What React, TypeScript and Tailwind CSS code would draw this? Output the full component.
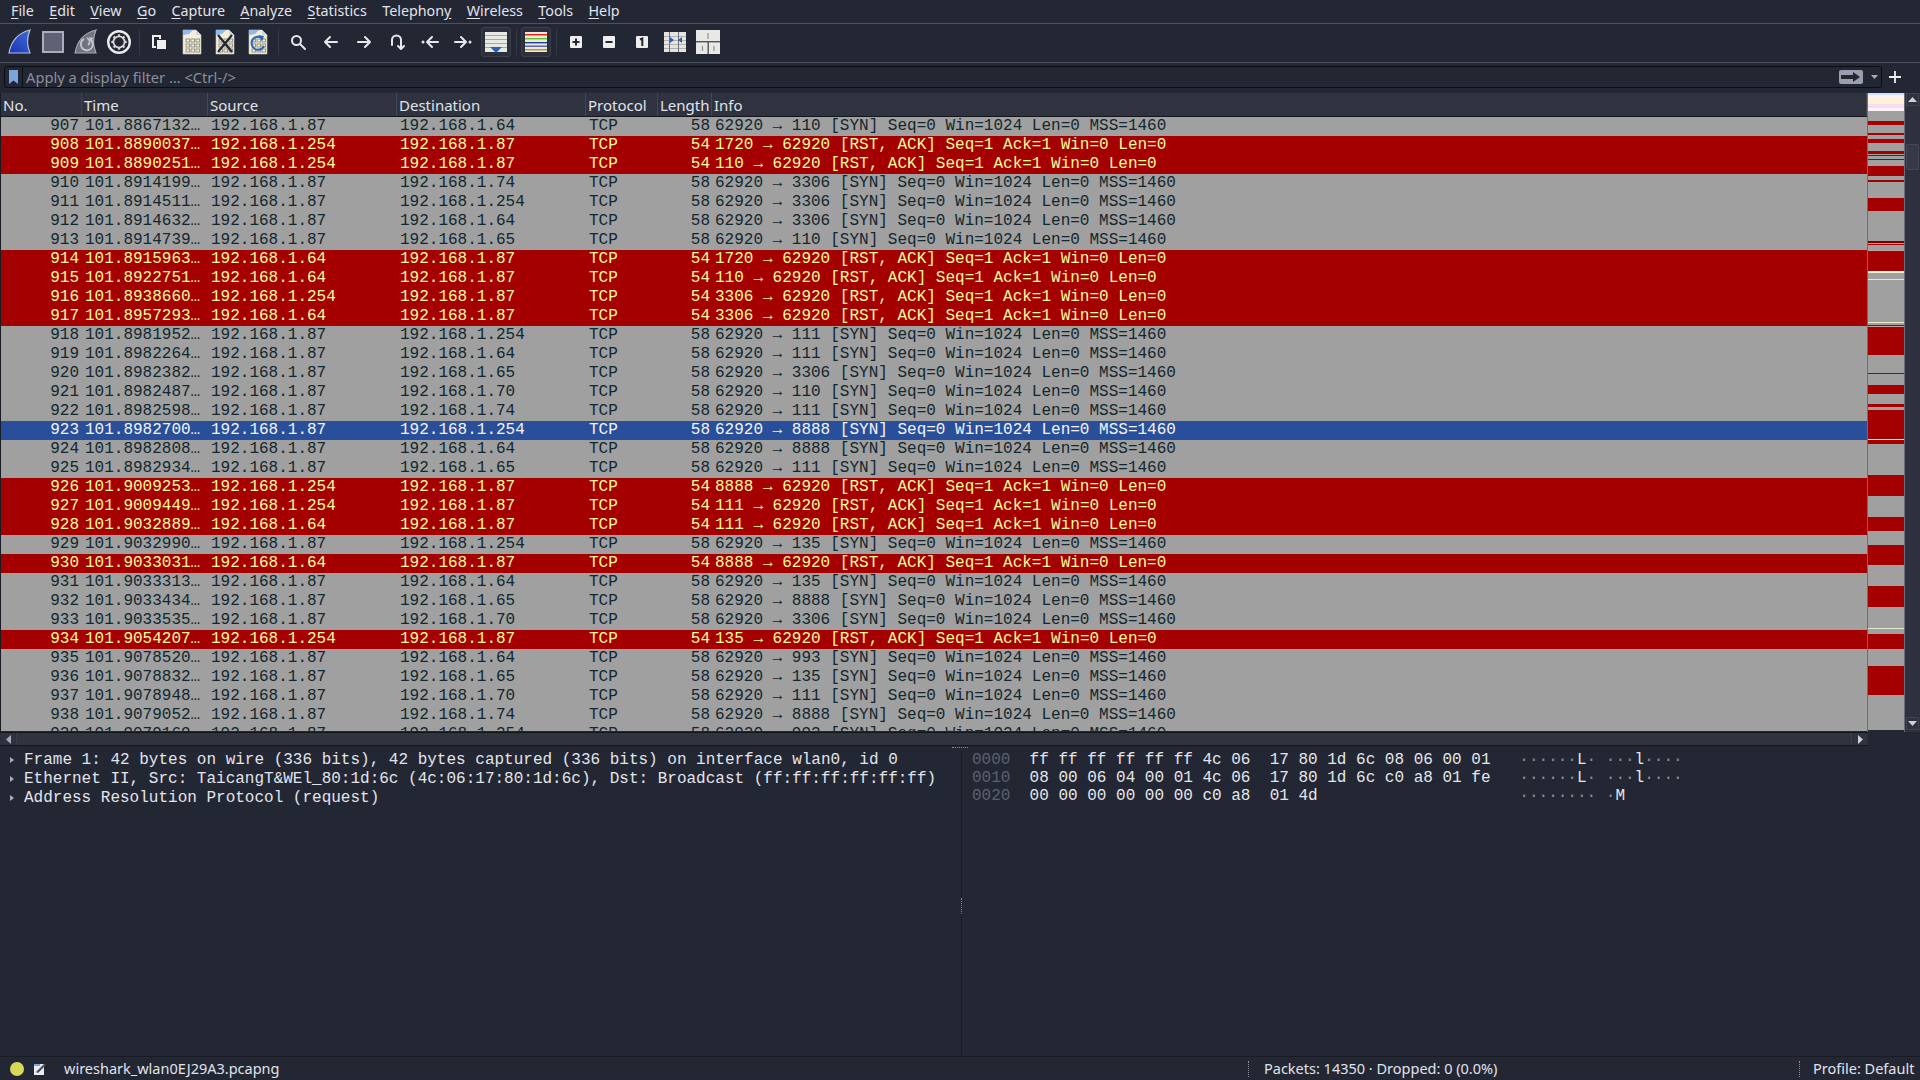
import React from "react";

type Kind = "syn" | "rst" | "sel";
type Packet = [number, string, string, string, number, string, Kind?];

const SYN = "[SYN] Seq=0 Win=1024 Len=0 MSS=1460";
const RST = "[RST, ACK] Seq=1 Ack=1 Win=0 Len=0";

const packets: Packet[] = [
  [907, "101.8867132…", ".87", ".64", 58, "62920 → 110"],
  [908, "101.8890037…", ".254", ".87", 54, "1720 → 62920"],
  [909, "101.8890251…", ".254", ".87", 54, "110 → 62920"],
  [910, "101.8914199…", ".87", ".74", 58, "62920 → 3306"],
  [911, "101.8914511…", ".87", ".254", 58, "62920 → 3306"],
  [912, "101.8914632…", ".87", ".64", 58, "62920 → 3306"],
  [913, "101.8914739…", ".87", ".65", 58, "62920 → 110"],
  [914, "101.8915963…", ".64", ".87", 54, "1720 → 62920"],
  [915, "101.8922751…", ".64", ".87", 54, "110 → 62920"],
  [916, "101.8938660…", ".254", ".87", 54, "3306 → 62920"],
  [917, "101.8957293…", ".64", ".87", 54, "3306 → 62920"],
  [918, "101.8981952…", ".87", ".254", 58, "62920 → 111"],
  [919, "101.8982264…", ".87", ".64", 58, "62920 → 111"],
  [920, "101.8982382…", ".87", ".65", 58, "62920 → 3306"],
  [921, "101.8982487…", ".87", ".70", 58, "62920 → 110"],
  [922, "101.8982598…", ".87", ".74", 58, "62920 → 111"],
  [923, "101.8982700…", ".87", ".254", 58, "62920 → 8888", "sel"],
  [924, "101.8982808…", ".87", ".64", 58, "62920 → 8888"],
  [925, "101.8982934…", ".87", ".65", 58, "62920 → 111"],
  [926, "101.9009253…", ".254", ".87", 54, "8888 → 62920"],
  [927, "101.9009449…", ".254", ".87", 54, "111 → 62920"],
  [928, "101.9032889…", ".64", ".87", 54, "111 → 62920"],
  [929, "101.9032990…", ".87", ".254", 58, "62920 → 135"],
  [930, "101.9033031…", ".64", ".87", 54, "8888 → 62920"],
  [931, "101.9033313…", ".87", ".64", 58, "62920 → 135"],
  [932, "101.9033434…", ".87", ".65", 58, "62920 → 8888"],
  [933, "101.9033535…", ".87", ".70", 58, "62920 → 3306"],
  [934, "101.9054207…", ".254", ".87", 54, "135 → 62920"],
  [935, "101.9078520…", ".87", ".64", 58, "62920 → 993"],
  [936, "101.9078832…", ".87", ".65", 58, "62920 → 135"],
  [937, "101.9078948…", ".87", ".70", 58, "62920 → 111"],
  [938, "101.9079052…", ".87", ".74", 58, "62920 → 8888"],
  [939, "101.9079169…", ".87", ".254", 58, "62920 → 993"],
];

// [top, bottom, colour] in page pixels, minimap starts at y=93
const minimapBands: [number, number, string][] = [
  [121, 125, "#a40000"], [133, 135, "#a40000"], [139, 143, "#a40000"], [151, 154, "#a40000"],
  [155, 156, "#a40000"], [159, 160, "#a40000"], [166, 176, "#a40000"], [180, 182, "#a40000"],
  [198, 211, "#a40000"], [241, 243, "#7a0000"], [244, 245, "#a40000"], [250, 251, "#c8a0a0"],
  [251, 271, "#a40000"], [271, 273, "#f4f8d8"], [279, 280, "#e4ecc8"], [322, 323, "#e4ecc8"],
  [325, 326, "#a40000"], [326, 327, "#c8a0a0"], [327, 355, "#a40000"], [373, 374, "#a40000"],
  [385, 394, "#a40000"], [404, 407, "#a40000"], [410, 411, "#a40000"], [411, 439, "#a40000"],
  [439, 440, "#fcfcf0"], [440, 444, "#a40000"], [475, 496, "#a40000"], [517, 531, "#a40000"],
  [545, 565, "#a40000"], [586, 607, "#a40000"], [628, 629, "#e4ecc8"], [634, 649, "#a40000"],
  [666, 695, "#a40000"],
];

const rowStyles: Record<Kind, string> = {
  syn: "bg-[#a0a0a0] text-[#12272e]",
  rst: "bg-[#a40000] text-[#fffc9c]",
  sel: "bg-[#2a4f9a] text-[#f4f4f8]",
};

const menus: [string, string, string][] = [
  ["", "F", "ile"], ["", "E", "dit"], ["", "V", "iew"], ["", "G", "o"], ["", "C", "apture"], ["", "A", "nalyze"],
  ["", "S", "tatistics"], ["Telephon", "y", ""], ["", "W", "ireless"], ["", "T", "ools"], ["", "H", "elp"],
];

const DocBase = ({ children }: { children?: React.ReactNode }) => (
  <svg width="24" height="26" viewBox="0 0 24 26">
    <path d="M3 1h13l5 5v19H3z" fill="#f3eed8" stroke="#c9c6b4" strokeWidth="0.6" />
    <path d="M3 1h10l-4 4-6 1z" fill="#8fbce8" />
    <path d="M16 1l5 5h-5z" fill="#cfd8e0" />
    {[10, 15, 20].map((y) =>
      [6, 11, 16].map((x) => <rect key={`${x}-${y}`} x={x} y={y} width="3.6" height="3" fill="none" stroke="#8a8c86" strokeWidth="0.9" />),
    )}
    {children}
  </svg>
);

const SquareIcon = ({ d }: { d: string }) => (
  <svg width="14" height="14" viewBox="0 0 14 14">
    <rect x="1" y="1" width="12" height="12" rx="1" fill="#eeeeee" />
    <path d={d} stroke="#23272f" strokeWidth="2" fill="none" />
  </svg>
);

const Stroke = ({ d }: { d: string }) => (
  <svg width="18" height="18" viewBox="0 0 18 18" fill="none" stroke="#e6e8ee" strokeWidth="2" strokeLinecap="round" strokeLinejoin="round">
    <path d={d} />
  </svg>
);

const gearTeeth = [0, 45, 90, 135, 180, 225, 270, 315];

const toolIcons: React.ReactNode[] = [
  <svg key="fin" width="24" height="26" viewBox="0 0 24 26">
    <defs>
      <linearGradient id="finBlue" x1="0" y1="1" x2="1" y2="0">
        <stop offset="0" stopColor="#1c34b0" />
        <stop offset="1" stopColor="#3f6ad8" />
      </linearGradient>
    </defs>
    <path d="M1 24C3 13 10 4 22 1c-3 7-3 16 0 23z" fill="url(#finBlue)" stroke="#b4c2de" strokeWidth="1.2" />
  </svg>,
  <svg key="stop" width="24" height="24" viewBox="0 0 24 24">
    <rect x="2" y="2" width="20" height="20" fill="#5e6274" stroke="#a9adbc" strokeWidth="2" />
  </svg>,
  <svg key="restart" width="24" height="26" viewBox="0 0 24 26">
    <path d="M1 24C3 13 10 4 22 1c-3 7-3 16 0 23z" fill="#70747f" stroke="#a6aab8" strokeWidth="1.2" />
    <path d="M10 10a6 6 0 1 0 7 1" fill="none" stroke="#c8cad2" strokeWidth="1.8" />
    <path d="M13 9a4 4 0 0 1 1 7" fill="none" stroke="#c8cad2" strokeWidth="1.6" />
    <path d="M15 8l4 1-2 4z" fill="#c8cad2" />
  </svg>,
  <svg key="gear" width="26" height="26" viewBox="0 0 26 26" fill="none">
    <circle cx="13" cy="13" r="10.8" stroke="#ececec" strokeWidth="2.4" />
    <circle cx="13" cy="13" r="5.6" stroke="#d8d8d8" strokeWidth="1.8" />
    {gearTeeth.map((a) => (
      <rect key={a} x="11.9" y="5.300" width="2.2" height="2.600" fill="#d8d8d8" transform={`rotate(${a} 13 13)`} />
    ))}
  </svg>,
  null,
  <svg key="open" width="16" height="16" viewBox="0 0 16 16">
    <path d="M1 1h9v4h-5v9H1z" fill="#f0f0f0" />
    <path d="M3 3h5v2H5v7H3z" fill="#23272f" />
    <rect x="6" y="6" width="9" height="9" fill="#f0f0f0" />
  </svg>,
  <DocBase key="doc" />,
  <DocBase key="close">
    <path d="M5 6l14 17M19 6L5 23" stroke="#23272f" strokeWidth="2.2" />
  </DocBase>,
  <DocBase key="reload">
    <path d="M17 10a6.5 6.5 0 1 0 1 7" stroke="#2b68b8" strokeWidth="2" fill="none" />
    <path d="M12 6l6 1-2 5z" fill="#2b68b8" />
  </DocBase>,
  null,
  <svg key="find" width="18" height="18" viewBox="0 0 18 18" fill="none" stroke="#e6e8ee" strokeWidth="2" strokeLinecap="round">
    <circle cx="7.5" cy="7.5" r="4.5" />
    <path d="M11 11l5 5" />
  </svg>,
  <Stroke key="back" d="M15 9H3M8 4L3 9l5 5" />,
  <Stroke key="fwd" d="M3 9h12M10 4l5 5-5 5" />,
  <Stroke key="goto" d="M4 12V7a4.500 4.500 0 0 1 9 0v8M10 13l3 3 3-3" />,
  <svg key="prev" width="18" height="18" viewBox="0 0 18 18" fill="none" stroke="#e6e8ee" strokeWidth="2" strokeLinecap="round" strokeLinejoin="round">
    <path d="M17 9H7M11 4L6 9l5 5" />
    <circle cx="2" cy="9" r="1.500" fill="#e6e8ee" stroke="none" />
  </svg>,
  <svg key="next" width="18" height="18" viewBox="0 0 18 18" fill="none" stroke="#e6e8ee" strokeWidth="2" strokeLinecap="round" strokeLinejoin="round">
    <path d="M1 9h10M7 4l5 5-5 5" />
    <circle cx="16" cy="9" r="1.500" fill="#e6e8ee" stroke="none" />
  </svg>,
  <div key="auto" className="flex h-[30px] w-[30px] items-center justify-center rounded-[3px] border border-[#3c404c] bg-[#2c303c]">
    <svg width="22" height="21" viewBox="0 0 22 21">
      <rect width="22" height="20" fill="#e8e8e4" />
      {[3, 7, 11, 15].map((y) => <rect key={y} y={y} width="22" height="1" fill="#a8a8a8" />)}
      <path d="M5 15h12l-6 6z" fill="#2b62b0" />
    </svg>
  </div>,
  null,
  <div key="color" className="flex h-[30px] w-[30px] items-center justify-center rounded-[3px] border border-[#3c404c] bg-[#2c303c]">
    <svg width="22" height="20" viewBox="0 0 22 20">
      <rect width="22" height="20" fill="#ece8dc" />
      <rect y="2" width="22" height="1.4" fill="#e02020" />
      <rect y="6" width="22" height="1.4" fill="#60c020" />
      <rect y="10" width="22" height="1.4" fill="#2040a0" />
      <rect y="13.5" width="22" height="1.4" fill="#5060a0" />
      <rect y="17" width="22" height="1.4" fill="#c89020" />
    </svg>
  </div>,
  null,
  <SquareIcon key="zin" d="M3.5 7h7M7 3.5v7" />,
  <SquareIcon key="zout" d="M3.5 7h7" />,
  <SquareIcon key="z1" d="M5 4.5L7.3 3.5V11" />,
  <svg key="resize" width="22" height="20" viewBox="0 0 22 20">
    <rect width="22" height="20" fill="#e4e4e0" />
    {[4, 8, 12, 16].map((y) => <rect key={y} y={y} width="22" height="1" fill="#b0b0b0" />)}
    <rect x="5" width="1" height="20" fill="#707070" />
    <rect x="14" width="1" height="20" fill="#707070" />
    <path d="M6 5l4 3-4 3zM18 5l-4 3 4 3z" fill="#2b62b0" />
  </svg>,
  <svg key="layout" width="24" height="24" viewBox="0 0 24 24">
    <rect width="24" height="24" fill="#e8e8e4" />
    <rect y="11" width="24" height="1.4" fill="#50545c" />
    <rect x="11.5" y="11" width="1.4" height="13" fill="#50545c" />
    <path d="M12 3v6M6.5 16v5M18 16v5" stroke="#909090" strokeWidth="1.2" />
  </svg>,
];

const Separator = () => (
  <div className="flex h-full w-[7px] items-center justify-center">
    <div className="h-[26px] w-px bg-[#343845]" />
  </div>
);

const columns = [
  { label: "No.", cls: "w-[81px]" },
  { label: "Time", cls: "w-[126px]" },
  { label: "Source", cls: "w-[189px]" },
  { label: "Destination", cls: "w-[189px]" },
  { label: "Protocol", cls: "w-[72px]" },
  { label: "Length", cls: "w-[54px]" },
  { label: "Info", cls: "flex-1" },
];

const Dots = () => <span className="text-[#8a8d96]">·</span>;

const HexLine = ({ off, hex, ascii }: { off: string; hex: string; ascii: string }) => (
  <div className="h-[18px] whitespace-pre leading-[18px] text-[#e4e6ea]">
    <span className="text-[#5c606b]">{off}</span>
    {"  " + hex.padEnd(48, " ") + "   "}
    {ascii.split("").map((ch, i) => (ch === "." ? <Dots key={i} /> : <span key={i}>{ch}</span>))}
  </div>
);

const Triangle = () => (
  <svg width="6" height="8" viewBox="0 0 6 8" className="mr-[9px] shrink-0">
    <path d="M1 1l4 3-4 3z" fill="#a8acb6" />
  </svg>
);

export default function App() {
  return (
    <div className="flex h-screen w-full flex-col overflow-hidden bg-[#232733] font-['Noto_Sans',sans-serif] text-[15px] text-[#e0e3ea]">
      {/* menu bar */}
      <div className="flex h-[23px] shrink-0 items-center gap-[15.4px] pb-[1px] pl-[11px] text-[14.3px] leading-none">
        {menus.map(([pre, key, post]) => (
          <span key={pre + key + post}>
            {pre}
            <span className="underline underline-offset-2">{key}</span>
            {post}
          </span>
        ))}
      </div>
      <div className="h-px shrink-0 bg-[#4e525e]" />

      {/* toolbar */}
      <div className="flex h-[38px] shrink-0 items-center pb-[2px] pl-[3.5px]">
        {toolIcons.map((icon, i) =>
          icon === null ? (
            <Separator key={i} />
          ) : (
            <div key={i} className="flex h-full w-[33px] items-center justify-center">
              {icon}
            </div>
          ),
        )}
      </div>
      <div className="h-px shrink-0 bg-[#4e525e]" />

      {/* display filter */}
      <div className="flex h-[30px] shrink-0 items-start pl-[4px] pr-[18px] pt-[3px]">
        <div className="flex h-[22px] flex-1 items-center rounded-[3px] border border-[#0c0d12] bg-[#232733]">
          <div className="flex h-full w-[18px] shrink-0 items-center justify-center border-r border-[#0c0d12]">
            <svg width="9" height="14" viewBox="0 0 9 14">
              <path d="M0 0h9v14L4.500 10.500 0 14z" fill="#7aa6dc" />
            </svg>
          </div>
          <span className="flex-1 pl-[3px] text-[14.7px] text-[#8b8f99]">Apply a display filter … &lt;Ctrl-/&gt;</span>
          <div className="flex h-[14px] w-[24px] items-center justify-center rounded-[2px] bg-[#9a9eae]">
            <svg width="20" height="10" viewBox="0 0 20 10">
              <path d="M0 3h12V0l7 5-7 5V7H0z" fill="#23272f" />
            </svg>
          </div>
          <svg width="7" height="4" viewBox="0 0 7 4" className="ml-[8px] mr-[3px]">
            <path d="M0 0h7L3.500 4z" fill="#a8acb6" />
          </svg>
        </div>
        <svg width="14" height="14" viewBox="0 0 14 14" className="ml-[6px] mt-[4px]">
          <path d="M7 1v12M1 7h12" stroke="#f0f0f0" strokeWidth="1.8" />
        </svg>
      </div>

      {/* packet list */}
      <div className="flex h-[639px] shrink-0">
        <div className="flex w-[1867px] shrink-0 flex-col overflow-hidden border-l border-[#1a1c24] font-['Liberation_Mono',monospace] text-[16px]">
          <div className="flex h-[24px] shrink-0 border-b border-[#14161c] bg-[#2f3340] font-['Noto_Sans',sans-serif] text-[15px] leading-[24px]">
            {columns.map((c) => (
              <div key={c.label} className={`${c.cls} border-r border-[#434754] pl-[2px]`}>
                {c.label}
              </div>
            ))}
          </div>
          <div className="h-[614px] overflow-hidden">
            {packets.map(([no, time, src, dst, len, ports, kind]) => {
              const style = rowStyles[kind ?? (len === 54 ? "rst" : "syn")];
              return (
                <div key={no} className={`flex h-[19px] whitespace-pre leading-[18px] ${style}`}>
                  <div className="w-[81px] pr-[3px] text-right">{no}</div>
                  <div className="w-[126px] pl-[3px]">{time}</div>
                  <div className="w-[189px] pl-[3px]">{"192.168.1" + src}</div>
                  <div className="w-[189px] pl-[3px]">{"192.168.1" + dst}</div>
                  <div className="w-[72px] pl-[3px]">TCP</div>
                  <div className="w-[54px] pr-[2px] text-right">{len}</div>
                  <div className="flex-1 pl-[3px]">
                    {ports} {len === 54 ? RST : SYN}
                  </div>
                </div>
              );
            })}
          </div>
        </div>

        {/* minimap */}
        <div className="w-[38px] shrink-0 border-x border-[#6a6e78]">
          <svg width="36" height="637" viewBox="0 93 36 637" className="block">
            <rect y="93" width="36" height="637" fill="#a0a0a0" />
            <rect y="93" width="36" height="2" fill="#cfe0ff" />
            <rect y="95" width="36" height="3" fill="#fdf0f8" />
            <rect y="98" width="36" height="6" fill="#fdf1d6" />
            <rect y="104" width="36" height="4" fill="#f8dcf4" />
            <rect y="108" width="36" height="3" fill="#fdf4f8" />
            {minimapBands.map(([a, b, c]) => (
              <rect key={a} y={a} width="36" height={b - a} fill={c} />
            ))}
          </svg>
        </div>

        {/* vertical scrollbar */}
        <div className="flex flex-1 flex-col items-center bg-[#2d313d] px-[1px]">
          <div className="flex h-[13px] w-[13px] shrink-0 items-center justify-center border border-[#3f4350] bg-[#2f3340]">
            <svg width="9" height="5" viewBox="0 0 9 5"><path d="M4.500 0L9 5H0z" fill="#cfd2da" /></svg>
          </div>
          <div className="mt-[38px] h-[26px] w-[13px] rounded-[1px] border border-[#434754] bg-[#363a47]" />
          <div className="flex-1" />
          <div className="mb-[2px] flex h-[13px] w-[13px] shrink-0 items-center justify-center border border-[#3f4350] bg-[#2f3340]">
            <svg width="9" height="5" viewBox="0 0 9 5"><path d="M0 0h9L4.500 5z" fill="#cfd2da" /></svg>
          </div>
        </div>
      </div>

      {/* horizontal scrollbar */}
      <div className="flex h-[14px] w-[1868px] shrink-0 items-center border-y border-[#14161c] bg-[#2d313d] px-[2px]">
        <div className="flex h-[12px] w-[12px] items-center justify-center bg-[#2f3340]">
          <svg width="5" height="9" viewBox="0 0 5 9"><path d="M5 0v9L0 4.500z" fill="#a8acb6" /></svg>
        </div>
        <div className="mx-[2px] h-[12px] flex-1 border-x border-[#3a3e4a] bg-[#30343f]" />
        <div className="flex h-[12px] w-[12px] items-center justify-center bg-[#2f3340]">
          <svg width="5" height="9" viewBox="0 0 5 9"><path d="M0 0v9l5-4.500z" fill="#cfd2da" /></svg>
        </div>
      </div>

      {/* splitter */}
      <div className="flex h-[4px] shrink-0 items-start justify-center">
        <div className="mt-[1px] h-[2px] w-[16px] border-t border-dotted border-[#8a8d96]" />
      </div>

      {/* details + bytes */}
      <div className="flex min-h-0 flex-1 border-b border-[#1a1c24] font-['Liberation_Mono',monospace] text-[16px]">
        <div className="w-[962px] shrink-0 border-r border-[#1b1e27] text-[#e2e4ea]">
          <div className="flex h-[19px] items-center whitespace-pre pl-[9px]">
            <Triangle />
            Frame 1: 42 bytes on wire (336 bits), 42 bytes captured (336 bits) on interface wlan0, id 0
          </div>
          <div className="flex h-[19px] items-center whitespace-pre pl-[9px]">
            <Triangle />
            Ethernet II, Src: TaicangT&amp;WEl_80:1d:6c (4c:06:17:80:1d:6c), Dst: Broadcast (ff:ff:ff:ff:ff:ff)
          </div>
          <div className="flex h-[19px] items-center whitespace-pre pl-[9px]">
            <Triangle />
            Address Resolution Protocol (request)
          </div>
        </div>
        <div className="relative flex-1 pl-[10px] pt-[1px]">
          <div className="absolute left-[-1px] top-[148px] h-[16px] w-[2px] border-l border-dotted border-[#8a8d96]" />
          <HexLine off="0000" hex="ff ff ff ff ff ff 4c 06  17 80 1d 6c 08 06 00 01" ascii="......L. ...l...." />
          <HexLine off="0010" hex="08 00 06 04 00 01 4c 06  17 80 1d 6c c0 a8 01 fe" ascii="......L. ...l...." />
          <HexLine off="0020" hex="00 00 00 00 00 00 c0 a8  01 4d" ascii="........ .M" />
        </div>
      </div>

      {/* status bar */}
      <div className="flex h-[23px] shrink-0 items-center text-[14.5px]">
        <div className="ml-[10px] h-[14px] w-[14px] rounded-full bg-[#d8d858]" />
        <svg width="14" height="14" viewBox="0 0 14 14" className="ml-[9px]">
          <rect x="1" y="2" width="10" height="11" fill="#e8ecf0" />
          <path d="M3 10L11 2l2 1-8 8z" fill="#4a4e58" />
          <rect x="1" y="2" width="6" height="2" fill="#7aa6dc" />
        </svg>
        <span className="ml-[17px] flex-1">wireshark_wlan0EJ29A3.pcapng</span>
        <div className="h-[16px] border-l border-dotted border-[#8a8d96]" />
        <span className="ml-[15px] w-[535px]">Packets: 14350 · Dropped: 0 (0.0%)</span>
        <div className="h-[16px] border-l border-dotted border-[#8a8d96]" />
        <span className="ml-[13px] w-[107px]">Profile: Default</span>
      </div>
    </div>
  );
}
